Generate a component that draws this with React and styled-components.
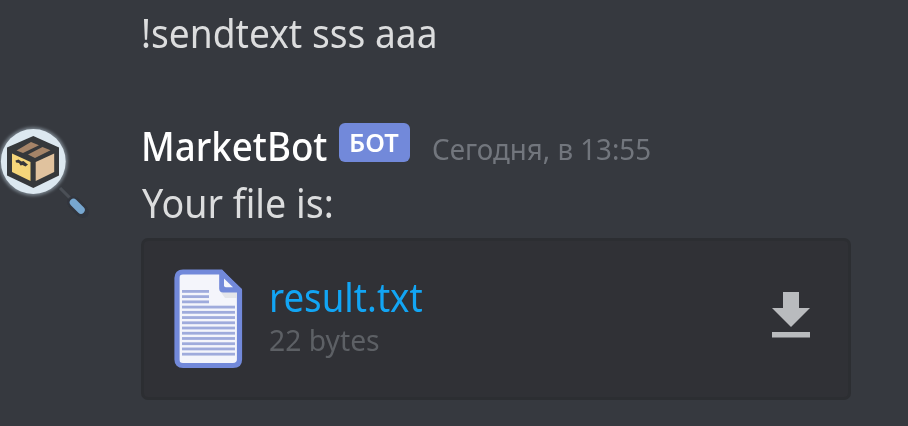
import React from 'react';
import styled, { createGlobalStyle } from 'styled-components';

const GlobalStyle = createGlobalStyle`
  * { box-sizing: border-box; }
  body { margin: 0; background: #36393f; overflow: hidden; }
`;

const Chat = styled.main`
  width: 908px;
  height: 426px;
  display: flex;
  flex-direction: column;
  background: #36393f;
  font-family: 'Noto Sans', 'Open Sans', sans-serif;
  overflow: hidden;
`;

const Label = styled.span`
  display: block;
  flex: none;
  width: ${(p) => p.$width}px;
  transform: scaleX(${(p) => p.$stretch || 1});
  transform-origin: 0 50%;
  white-space: nowrap;
`;

const PlainMessage = styled.div`
  height: 118px;
  padding: 5px 0 0 141px;
  color: #dcddde;
  font-size: 40px;
  line-height: 56px;
`;

const BotMessage = styled.article`
  display: grid;
  grid-template-columns: 141px 710px;
`;

const Avatar = styled.svg`
  display: block;
  width: 100px;
  height: 108px;
`;

const Header = styled.header`
  display: flex;
  height: 57px;
`;

const Author = styled(Label)`
  color: #fff;
  font-size: 40px;
  font-weight: 500;
  line-height: 55px;
`;

const Badge = styled.span`
  width: 71px;
  height: 39px;
  margin: 5px 22px 0 10px;
  padding-left: 10px;
  border-radius: 6px;
  background: #7289da;
  color: #fff;
  font-size: 26px;
  font-weight: 600;
  line-height: 38px;
`;

const Timestamp = styled(Label)`
  color: #72767d;
  font-size: 29px;
  line-height: 61px;
`;

const Body = styled.div`
  height: 63px;
  padding-left: 1px;
  color: #dcddde;
  font-size: 40px;
  line-height: 56px;
`;

const Attachment = styled.section`
  display: flex;
  align-items: center;
  width: 710px;
  height: 162px;
  padding: 0 38px 0 30px;
  border: 3px solid #2c2e32;
  border-radius: 7px;
  background: #303136;
`;

const FileIcon = styled.svg`
  flex: none;
  width: 69px;
  height: 100px;
`;

const FileInfo = styled.div`
  flex: 1;
  height: 100px;
  padding: 3px 0 0 26px;
`;

const FileName = styled(Label)`
  height: 50px;
  color: #12a5f4;
  font-size: 40px;
  line-height: 50px;
`;

const FileSize = styled(Label)`
  color: #5d6065;
  font-size: 29px;
  line-height: 36px;
`;

const DownloadIcon = styled.svg`
  flex: none;
  width: 38px;
  height: 46px;
  margin-top: -8px;
`;

function BotAvatar() {
  return (
    <Avatar viewBox="0 118 100 108">
      <defs>
        <filter id="glow" x="-20%" y="-20%" width="140%" height="140%">
          <feGaussianBlur stdDeviation="1.6" />
        </filter>
        <filter id="soft"><feGaussianBlur stdDeviation="0.7" /></filter>
      </defs>
      <circle cx="33.3" cy="161.5" r="34.5" fill="#9eacb7" opacity=".6" filter="url(#glow)" />
      <circle cx="33.3" cy="161.5" r="32.4" fill="#dce8f0" filter="url(#soft)" />
      <g filter="url(#soft)">
        <path d="M33.3 136 59 147.5v28L33.3 188 7 175.5v-28Z" fill="#34373a" />
        <path d="m12 153.5 18.5 8.5v19L12 172Z" fill="#f5d67a" />
        <path d="m35.7 162 18.5-8.5V172l-18.5 9Z" fill="#e0c29e" />
        <path d="m16.5 150.5 14.5-8.5 8 3.2-16 7.8Z" fill="#a58468" />
        <path d="m28 154.5 14.5-7.5 8 3.2-15.5 7.8Z" fill="#a58468" />
        <path d="m15.5 160.5 3-1 3 2 2-.5 3 2.5 1.5 1-2.5 2-3-1.5-2 .5-1.5-2.5-3-.5Z" fill="#39393a" />
        <path d="m60 188 10 10" stroke="#4b5057" strokeWidth="3" />
        <path d="m73 202 10 10" stroke="#2d333c" strokeWidth="12" strokeLinecap="round" opacity=".6" />
        <path d="m73.5 202.5 7.5 7.5" stroke="#77a7d0" strokeWidth="7.5" strokeLinecap="round" />
      </g>
    </Avatar>
  );
}

const textLines = Array.from({ length: 13 }, (_, i) => ({
  y: 21 + i * 5.23,
  width: i < 3 ? 27 : 53,
}));

function DocumentIcon() {
  return (
    <FileIcon viewBox="0 0 69 100">
      <path d="M9 3H47L65.5 22V90.5q0 6-6.5 6H9q-6 0-6-6V9q0-6 6-6Z" fill="#f4f5fb" stroke="#7289da" strokeWidth="5.2" />
      <path d="M46 22h17v7H51Z" fill="#e4e5ea" />
      <path d="M45.2 2v17.5q0 4 4 4H68V20L48 1Z" fill="#7289da" />
      <path d="M50 9.5v7q0 1.8 1.8 1.8H59Z" fill="#f4f5fb" />
      {textLines.map(({ y, width }) => (
        <rect key={y} x="8" y={y} width={width} height="2.8" fill="#9fabdc" />
      ))}
    </FileIcon>
  );
}

export default function App() {
  return (
    <>
      <GlobalStyle />
      <Chat>
        <PlainMessage><Label $width={300} $stretch={0.929}>!sendtext sss aaa</Label></PlainMessage>
        <BotMessage>
          <BotAvatar />
          <div>
            <Header>
              <Author $width={188} $stretch={0.918}>MarketBot</Author>
              <Badge><Label $width={50} $stretch={0.98}>БОТ</Label></Badge>
              <Timestamp $width={220} $stretch={0.955}>Сегодня, в 13:55</Timestamp>
            </Header>
            <Body><Label $width={200} $stretch={0.94}>Your file is:</Label></Body>
            <Attachment>
              <DocumentIcon />
              <FileInfo>
                <FileName $width={160} $stretch={0.917}>result.txt</FileName>
                <FileSize $width={120} $stretch={0.975}>22 bytes</FileSize>
              </FileInfo>
              <DownloadIcon viewBox="0 0 38 46">
                <path d="M11 0h16v16h11L19 35 0 16h11ZM0 40h38v5.4H0Z" fill="#b9bbbe" />
              </DownloadIcon>
            </Attachment>
          </div>
        </BotMessage>
      </Chat>
    </>
  );
}
